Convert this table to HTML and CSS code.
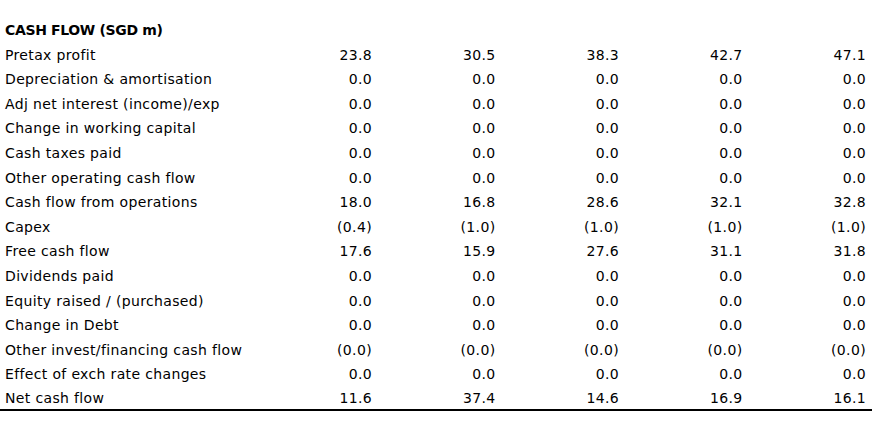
FILE: index.html
```html
<!DOCTYPE html>
<html>
<head>
<meta charset="utf-8">
<link rel="stylesheet" href="styles.css">
</head>
<body>
<table class="cf">
  <colgroup>
    <col class="c-label"><col class="c-num"><col class="c-num"><col class="c-num"><col class="c-num"><col class="c-num">
  </colgroup>
  <tbody>
    <tr class="head"><td>CASH FLOW (SGD m)</td><td></td><td></td><td></td><td></td><td></td></tr>
    <tr><td>Pretax profit</td><td>23.8</td><td>30.5</td><td>38.3</td><td>42.7</td><td>47.1</td></tr>
    <tr><td>Depreciation &amp; amortisation</td><td>0.0</td><td>0.0</td><td>0.0</td><td>0.0</td><td>0.0</td></tr>
    <tr><td>Adj net interest (income)/exp</td><td>0.0</td><td>0.0</td><td>0.0</td><td>0.0</td><td>0.0</td></tr>
    <tr><td>Change in working capital</td><td>0.0</td><td>0.0</td><td>0.0</td><td>0.0</td><td>0.0</td></tr>
    <tr><td>Cash taxes paid</td><td>0.0</td><td>0.0</td><td>0.0</td><td>0.0</td><td>0.0</td></tr>
    <tr><td>Other operating cash flow</td><td>0.0</td><td>0.0</td><td>0.0</td><td>0.0</td><td>0.0</td></tr>
    <tr><td>Cash flow from operations</td><td>18.0</td><td>16.8</td><td>28.6</td><td>32.1</td><td>32.8</td></tr>
    <tr><td>Capex</td><td>(0.4)</td><td>(1.0)</td><td>(1.0)</td><td>(1.0)</td><td>(1.0)</td></tr>
    <tr><td>Free cash flow</td><td>17.6</td><td>15.9</td><td>27.6</td><td>31.1</td><td>31.8</td></tr>
    <tr><td>Dividends paid</td><td>0.0</td><td>0.0</td><td>0.0</td><td>0.0</td><td>0.0</td></tr>
    <tr><td>Equity raised / (purchased)</td><td>0.0</td><td>0.0</td><td>0.0</td><td>0.0</td><td>0.0</td></tr>
    <tr><td>Change in Debt</td><td>0.0</td><td>0.0</td><td>0.0</td><td>0.0</td><td>0.0</td></tr>
    <tr><td>Other invest/financing cash flow</td><td>(0.0)</td><td>(0.0)</td><td>(0.0)</td><td>(0.0)</td><td>(0.0)</td></tr>
    <tr><td>Effect of exch rate changes</td><td>0.0</td><td>0.0</td><td>0.0</td><td>0.0</td><td>0.0</td></tr>
    <tr class="last"><td>Net cash flow</td><td>11.6</td><td>37.4</td><td>14.6</td><td>16.9</td><td>16.1</td></tr>
  </tbody>
</table>
</body>
</html>
```
FILE: styles.css
```css
html, body {
  margin: 0;
  padding: 0;
  background: #ffffff;
}
body {
  padding-top: 18px;
  font-family: "DejaVu Sans", sans-serif;
  font-size: 14px;
  letter-spacing: 0.35px;
  color: #000000;
}
.cf {
  width: 872px;
  border-collapse: collapse;
  table-layout: fixed;
}
.c-label { width: 254.5px; }
.c-num { width: 123.5px; }
.cf td {
  padding: 0 6px 0 0;
  height: 24.6px;
  line-height: 24.6px;
  white-space: nowrap;
  text-align: right;
  vertical-align: middle;
}
.cf td:first-child {
  text-align: left;
  padding: 0 0 0 5px;
}
.head td {
  font-weight: bold;
  letter-spacing: -0.35px;
}
.last td {
  height: 21px;
  line-height: 22px;
  vertical-align: top;
  border-bottom: 2px solid #000000;
}
```
